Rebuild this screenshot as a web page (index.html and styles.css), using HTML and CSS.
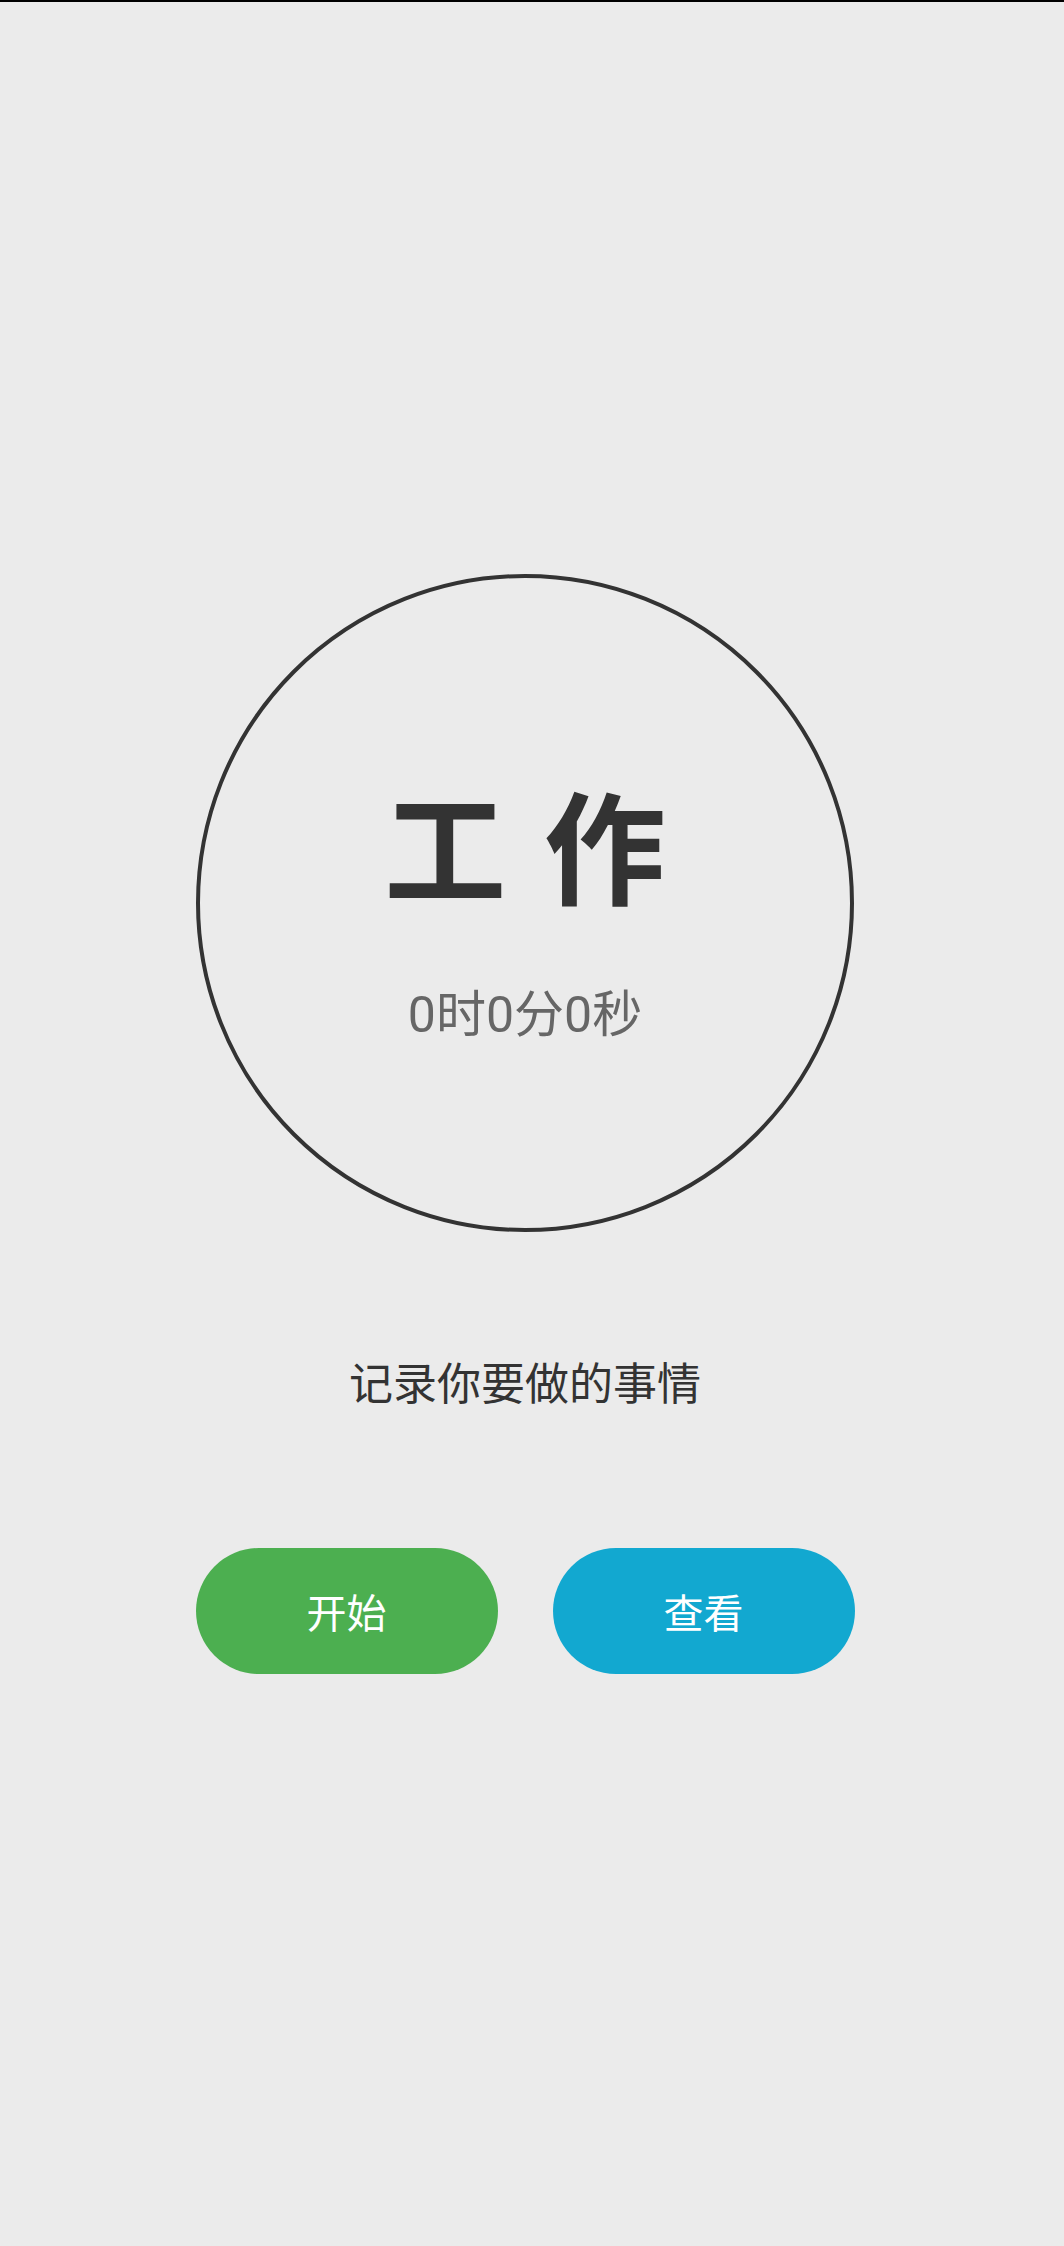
FILE: index.html
```html
<!DOCTYPE html>
<html lang="zh">
<head>
<meta charset="utf-8">
<link rel="stylesheet" href="styles.css">
</head>
<body>
<div class="topbar"></div>
<main class="page">
  <div class="dial">
    <div class="dial-title">工 作</div>
    <div class="dial-time">0时0分0秒</div>
  </div>
  <div class="task">记录你要做的事情</div>
  <div class="actions">
    <button class="btn btn-start">开始</button>
    <button class="btn btn-view">查看</button>
  </div>
</main>
</body>
</html>
```
FILE: styles.css
```css
html, body {
  margin: 0;
  padding: 0;
  background: #ebebeb;
}
body {
  width: 1064px;
  height: 2246px;
  overflow: hidden;
  font-family: Roboto, "Noto Sans CJK SC", sans-serif;
}
.topbar {
  height: 2px;
  background: #000;
}
.page {
  display: flex;
  flex-direction: column;
  align-items: center;
  padding-top: 572px;
  padding-right: 14px;
}
.dial {
  box-sizing: border-box;
  width: 658px;
  height: 658px;
  border: 4px solid #333333;
  border-radius: 50%;
  display: flex;
  flex-direction: column;
  align-items: center;
  justify-content: center;
  padding-top: 14px;
}
.dial-title {
  font-family: "Noto Sans CJK SC", sans-serif;
  font-weight: 700;
  font-size: 122px;
  line-height: 1;
  word-spacing: 10px;
  color: #333333;
}
.dial-time {
  margin-top: 87px;
  font-size: 50px;
  line-height: 1;
  color: #666666;
}
.task {
  margin-top: 127px;
  font-family: "Noto Sans CJK SC", sans-serif;
  font-size: 44px;
  line-height: 1;
  color: #333333;
}
.actions {
  display: flex;
  gap: 55px;
  margin-top: 145px;
}
.btn {
  width: 302px;
  height: 126px;
  border: none;
  border-radius: 63px;
  color: #ffffff;
  font-family: "Noto Sans CJK SC", sans-serif;
  font-size: 40px;
  padding: 0;
}
.btn-start {
  background: #4caf50;
}
.btn-view {
  background: #12a8d0;
}
```
